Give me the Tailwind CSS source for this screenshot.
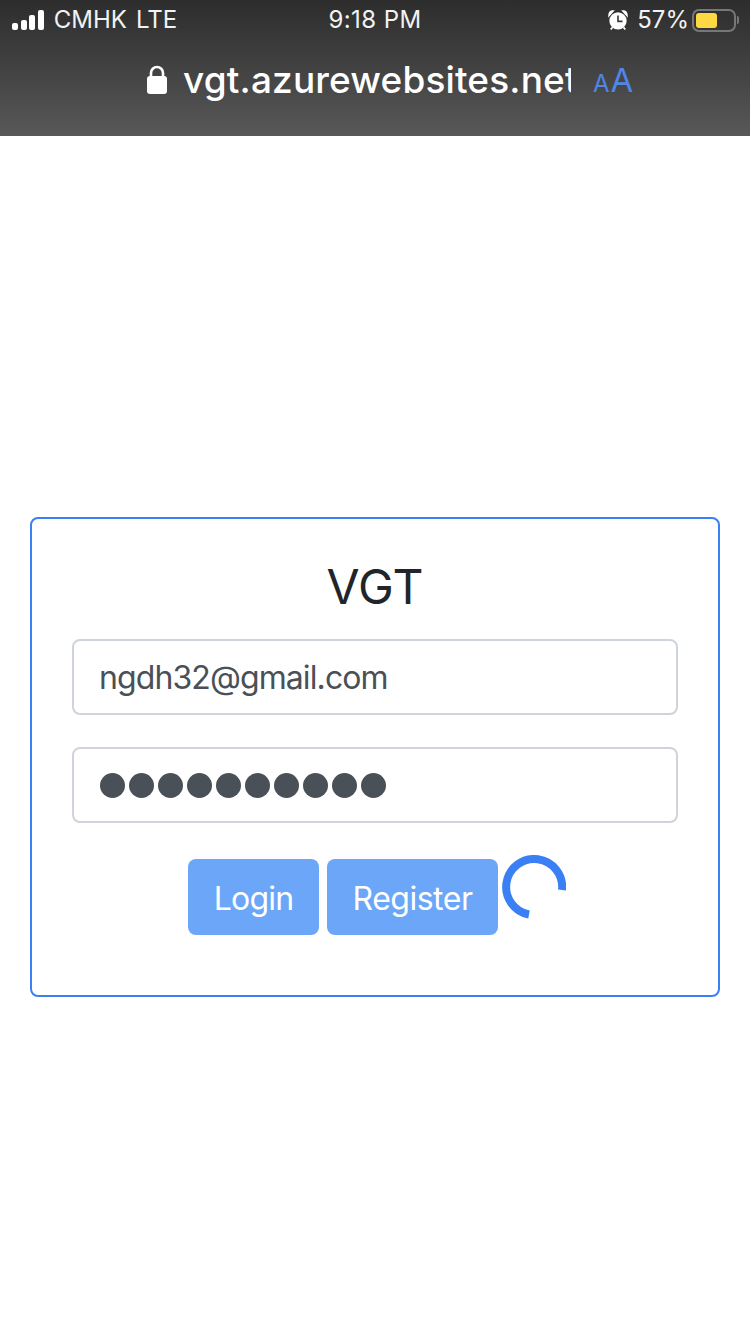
<!DOCTYPE html>
<html lang="en">
<head>
    <meta charset="UTF-8">
    <meta name="viewport" content="width=device-width, initial-scale=1.0">
    <title>VGT</title>
    <script src="https://cdn.jsdelivr.net/npm/@tailwindcss/browser@4"></script>
</head>
<body class="bg-white h-[1334px] overflow-hidden font-['Inter',sans-serif]">
<!-- browser chrome -->
<header class="h-[136px] bg-gradient-to-b from-[#2d2d2d] to-[#585858] text-white">
    <div class="h-[40px] flex items-center justify-between pl-[12px] pr-[11px] text-[24px] text-[#f2f2f2]">
        <div class="w-[260px] flex items-center">
            <div class="flex items-end gap-[2.6px] h-[20px] mr-[10px]">
                <span class="w-[6px] h-[7px] bg-white rounded-[2px]"></span>
                <span class="w-[6px] h-[10px] bg-white rounded-[2px]"></span>
                <span class="w-[6px] h-[15px] bg-white rounded-[2px]"></span>
                <span class="w-[6px] h-[20px] bg-white rounded-[2px]"></span>
            </div>
            <span>CMHK</span>
            <span class="ml-[9px]">LTE</span>
        </div>
        <div class="tracking-[0.4px] pr-[1px]">9:18 PM</div>
        <div class="w-[260px] flex items-center justify-end">
            <svg class="w-[20px] h-[22px] mr-[9px]" viewBox="0 0 22 22" fill="none">
                <circle cx="11" cy="12" r="9.5" fill="#fff"/>
                <path d="M1 6.5 L6 1 Q1 0.5 1 6.5Z M21 6.5 L16 1 Q21 0.5 21 6.5Z" fill="#fff" stroke="#fff" stroke-width="1.5"/>
                <path d="M11 6 V12.5 H16" stroke="#3a3a3a" stroke-width="1.8"/>
                <path d="M5 19 L3 21.5 M17 19 L19 21.5" stroke="#fff" stroke-width="2"/>
            </svg>
            <span class="mr-[3px]">57%</span>
            <div class="w-[44px] h-[23px] border-2 border-[#777] rounded-[7px] p-[2px]">
                <div class="w-[21px] h-full bg-[#fdd843] rounded-[3px]"></div>
            </div>
            <div class="w-[2px] h-[8px] bg-[#777] ml-[1px] rounded-r-[2px]"></div>
        </div>
    </div>
    <div class="h-[80px] flex items-center pl-[146px]">
        <svg class="w-[22px] h-[30px] mr-[15px]" viewBox="0 0 22 30" fill="none">
            <rect x="1" y="11" width="20" height="18" rx="3" fill="#fff"/>
            <path d="M5 12 V8 a6 6 0 0 1 12 0 V12" stroke="#fff" stroke-width="2.6"/>
        </svg>
        <div class="w-[388px] overflow-hidden whitespace-nowrap text-[37px] tracking-[0.15px] font-medium leading-[48px]">vgt.azurewebsites.net</div>
        <div class="ml-[22px] flex items-baseline text-[#4f86e8] leading-none">
            <span class="text-[24px] mr-[1px]">A</span><span class="text-[33px]">A</span>
        </div>
    </div>
</header>

<main class="pt-[381px] px-[30px]">
    <div class="h-[480px] border-2 border-[#3b7ff5] rounded-[8px] pt-[38px] px-[40px]">
        <h1 class="h-[60px] flex items-center justify-center text-[48px] leading-none text-[#212529]">VGT</h1>
        <input type="text" value="ngdh32@gmail.com" class="mt-[22px] block w-full h-[76px] px-[25px] pt-[1px] border-2 border-[#ced4da] rounded-[8px] text-[32px] tracking-[-0.9px] text-[#495057] outline-none">
        <div class="mt-[32px] w-full h-[76px] px-[26px] border-2 border-[#ced4da] rounded-[8px] flex items-center gap-[4px]" aria-label="password">
            <span class="w-[25px] h-[25px] rounded-full bg-[#495057]"></span>
            <span class="w-[25px] h-[25px] rounded-full bg-[#495057]"></span>
            <span class="w-[25px] h-[25px] rounded-full bg-[#495057]"></span>
            <span class="w-[25px] h-[25px] rounded-full bg-[#495057]"></span>
            <span class="w-[25px] h-[25px] rounded-full bg-[#495057]"></span>
            <span class="w-[25px] h-[25px] rounded-full bg-[#495057]"></span>
            <span class="w-[25px] h-[25px] rounded-full bg-[#495057]"></span>
            <span class="w-[25px] h-[25px] rounded-full bg-[#495057]"></span>
            <span class="w-[25px] h-[25px] rounded-full bg-[#495057]"></span>
            <span class="w-[25px] h-[25px] rounded-full bg-[#495057]"></span>
        </div>
        <div class="mt-[32px] pl-[116px] flex items-start">
            <button class="mt-[4px] pt-[3px] w-[131px] h-[76px] bg-[#6ba6f8] text-white text-[32px] tracking-[-0.8px] rounded-[8px]">Login</button>
            <button class="mt-[4px] pt-[3px] ml-[8px] w-[171px] h-[76px] bg-[#6ba6f8] text-white text-[32px] tracking-[-0.5px] rounded-[8px]">Register</button>
            <svg class="ml-[4px] w-[64px] h-[64px]" viewBox="0 0 64 64" fill="none">
                <path d="M60 35 A28 28 0 1 0 27 59.5" stroke="#3b7ff5" stroke-width="8"/>
            </svg>
        </div>
    </div>
</main>
</body>
</html>
